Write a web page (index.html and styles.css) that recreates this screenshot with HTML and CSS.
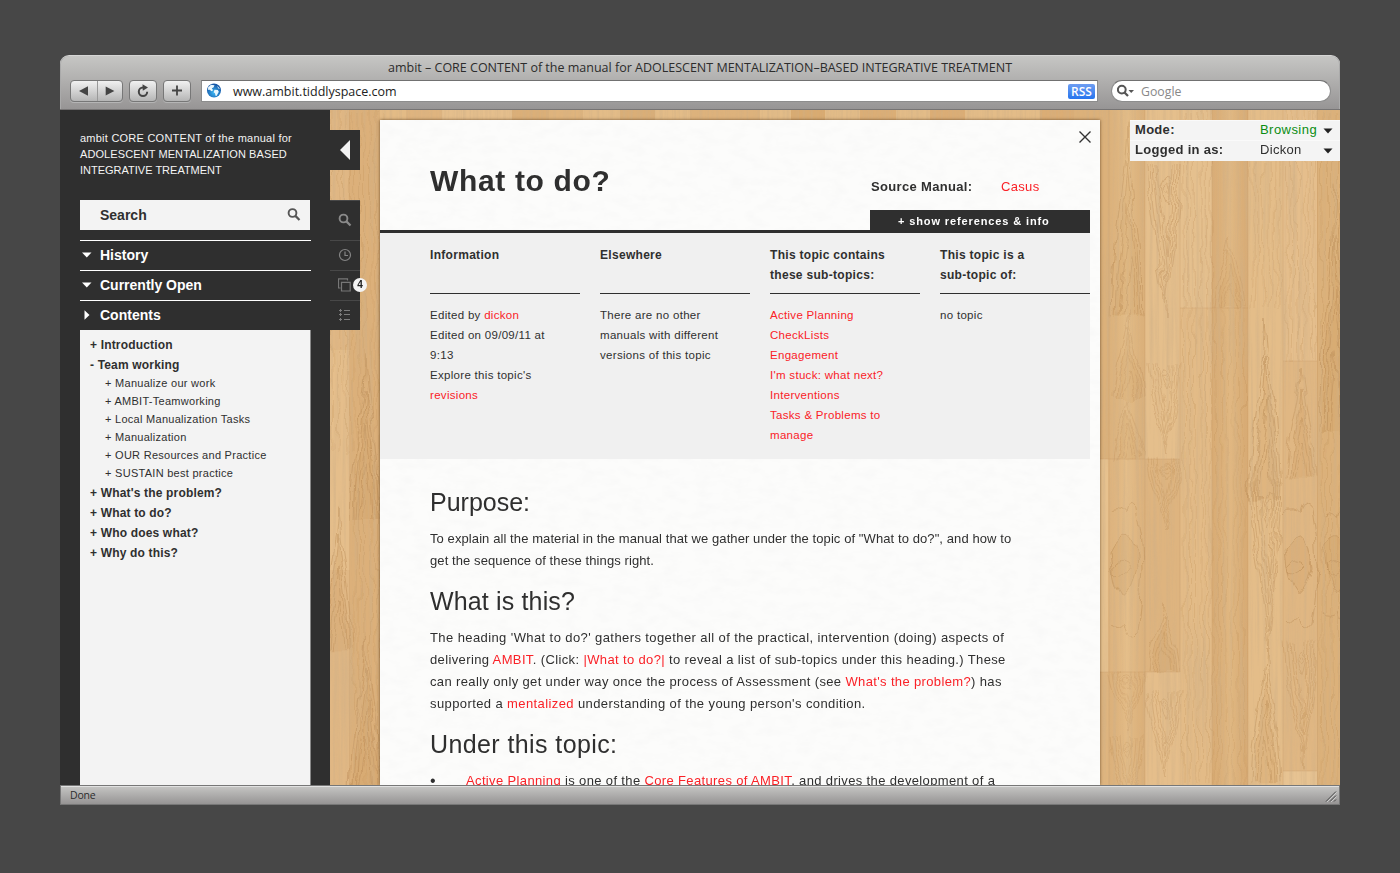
FILE: index.html
```html
<!DOCTYPE html>
<html lang="en">
<head>
<meta charset="utf-8">
<title>ambit</title>
<link rel="stylesheet" href="styles.css">
</head>
<body>
<div class="window">
  <header class="chrome">
    <div class="win-title"><span>ambit – CORE CONTENT of the manual for ADOLESCENT MENTALIZATION–BASED INTEGRATIVE TREATMENT</span></div>
    <div class="toolbar">
      <div class="btn nav">
        <svg width="26" height="20" viewBox="0 0 26 20"><path d="M8 10 17 5.3V14.700Z" fill="#444"/></svg>
        <svg class="second" width="26" height="20" viewBox="0 0 26 20"><path d="M17 10 8 5.300V14.700Z" fill="#444"/></svg>
      </div>
      <div class="btn"><svg width="26" height="20" viewBox="0 0 26 20"><path d="M13 6.500A4.200 4.200 0 1 0 17.200 10.700" fill="none" stroke="#444" stroke-width="2"/><path d="M12.500 3.200 18 6.600 12.800 9.800Z" fill="#444"/></svg></div>
      <div class="btn"><svg width="26" height="20" viewBox="0 0 26 20"><path d="M8 9.500H18M13 4.500V14.500" stroke="#444" stroke-width="1.800"/></svg></div>
      <div class="address">
        <svg width="16" height="16" viewBox="0 0 16 16"><defs><radialGradient id="globe" cx=".5" cy=".65" r=".6"><stop offset="0" stop-color="#3cb8f5"/><stop offset="1" stop-color="#1454a5"/></radialGradient></defs><circle cx="7" cy="7.500" r="7" fill="url(#globe)"/><path d="M1 4.500 4 1.700 7.500 2.300 6.500 4.500 4.800 5.200 6.200 7.300 4.500 8.300 2.800 6.800 1.200 7ZM7.500 6.700 10.800 7 11.800 8.700 9.500 13 8.500 12.700 8 10.300 6.600 9.300ZM10 2.800 13 5.800 11.300 5.600Z" fill="#e9f7fd"/></svg>
        <span class="url">www.ambit.tiddlyspace.com</span>
        <span class="rss">RSS</span>
      </div>
      <div class="google">
        <svg width="20" height="14" viewBox="0 0 20 14"><circle cx="4.800" cy="5.600" r="3.900" fill="none" stroke="#555" stroke-width="2"/><path d="M7.500 8.500 11 12" stroke="#555" stroke-width="2.300"/><path d="M11.500 6H17L14.200 9Z" fill="#555"/></svg>
        <span>Google</span>
      </div>
    </div>
  </header>

  <main class="viewport">
    <svg class="wood" width="1010" height="675" viewBox="330 110 1010 675">
      <defs>
        <filter id="grain" x="0" y="0" width="100%" height="100%"><feTurbulence type="fractalNoise" baseFrequency=".3 .008" numOctaves="4" seed="8"/><feColorMatrix values="0 0 0 0 .62  0 0 0 0 .43  0 0 0 0 .24  1.200 0 0 0 -.5"/></filter>
        <filter id="warp" x="0" y="0" width="100%" height="100%"><feTurbulence type="fractalNoise" baseFrequency=".05 .03" numOctaves="3" seed="5"/><feDisplacementMap in="SourceGraphic" scale="13" xChannelSelector="R" yChannelSelector="G"/></filter>
        <linearGradient id="tint"><stop offset="0" stop-color="#c08c54" stop-opacity=".1"/><stop offset=".5" stop-color="#f5d9a8" stop-opacity=".2"/><stop offset="1" stop-color="#c08c54" stop-opacity=".15"/></linearGradient>
        <symbol id="arch" width="35" height="160" viewBox="0 0 35 160" preserveAspectRatio="none"><path d="M6 158C8 98 15 90 18 36 22 88 28 100 30 158Z" fill="#cc9a60" fill-opacity=".22"/><g fill="none" stroke="#b98a54" stroke-opacity=".6" stroke-width=".8"><path d="M2 158C5 75 14 75 18 6 21 60 30 80 33 158"/><path d="M6 158C8 98 15 90 18 36 22 88 28 100 30 158"/><path d="M9 158C11 120 16 108 19 70 22 108 26 118 27 158"/><path d="M12 158Q15 132 19 108 23 135 24 158"/></g></symbol>
        <symbol id="vein" width="35" height="160" viewBox="0 0 35 160" preserveAspectRatio="none"><g fill="none" stroke="#b98a54" stroke-opacity=".5" stroke-width=".8"><path d="M1 2C5 80 14 90 20 158 24 100 32 80 34 2"/><path d="M5 2C8 75 15 84 20 140 24 90 30 75 31 2"/><path d="M8 2C11 60 17 72 20 118 24 74 27 60 28 2"/><path d="M11 2C13 46 18 60 20 96 23 60 24 46 25 2"/><path d="M14 22Q20 2 24 22 22 38 20 45 17 36 14 22ZM16 24Q20 12 22 24 20 34 16 24"/></g></symbol>
        <symbol id="knot" width="35" height="150" viewBox="0 0 35 150" preserveAspectRatio="none"><path d="M2 58Q10 42 17 45 27 52 28 75 24 97 14 105 5 95 2 58Z" fill="#cc9a60" fill-opacity=".22"/><g fill="none" stroke="#b98a54" stroke-opacity=".65" stroke-width=".8"><path d="M5 75Q12 64 21 76 12 87 5 81ZM2 58Q10 42 17 45 27 52 28 75 24 97 14 105 5 95 2 58ZM1 20Q10 13 16 22 20 3 28 15 34 45 34 76 31 115 28 136 20 148 16 128 10 137 1 130"/></g></symbol>
        <symbol id="lines" width="35" height="160" viewBox="0 0 35 160" preserveAspectRatio="none"><g fill="none" stroke="#b98a54" stroke-opacity=".3" stroke-width=".7"><path d="M3 0Q7 80 4 160M9 0Q11 70 8 160M15 0Q13 70 16 160M21 0Q24 80 20 160M27 0Q25 90 28 160M32 0Q30 80 32 160"/></g></symbol>
      </defs>
      <rect x="330" y="110" width="1010" height="675" fill="#e3bc88"/>
      <g>
        <rect x="330" y="110" width="20" height="675" fill="#e0b784"/><rect x="350" y="110" width="30" height="675" fill="#dcb07a"/><rect x="330" y="350" width="20" height="220" fill="#e5be8b"/>
        <rect x="380" y="110" width="26" height="10" fill="#e3bb86"/><rect x="406" y="110" width="36" height="10" fill="#dfb47f"/><rect x="442" y="110" width="70" height="10" fill="#e5bf8d"/><rect x="512" y="110" width="37" height="10" fill="#dbaf78"/><rect x="549" y="110" width="34" height="10" fill="#dfb47d"/><rect x="620" y="110" width="35" height="10" fill="#daae77"/><rect x="690" y="110" width="70" height="10" fill="#ddb27c"/><rect x="791" y="110" width="34" height="10" fill="#d9ab71"/><rect x="860" y="110" width="36" height="10" fill="#dbae76"/><rect x="930" y="110" width="35" height="10" fill="#dbad75"/><rect x="1040" y="110" width="34" height="10" fill="#dbad75"/>
        <rect x="1074" y="110" width="35" height="349" fill="#dcb17a"/><rect x="1109" y="110" width="36" height="349" fill="#dfb680"/><rect x="1145" y="110" width="35" height="349" fill="#e5bf8c"/><rect x="1180" y="110" width="32" height="198" fill="#e5c08e"/><rect x="1212" y="110" width="36" height="198" fill="#dcb17b"/><rect x="1248" y="110" width="35" height="675" fill="#e4bd89"/><rect x="1283" y="110" width="34" height="251" fill="#e5be8c"/><rect x="1317" y="110" width="23" height="675" fill="#dcb17a"/>
        <rect x="1100" y="459" width="8" height="213" fill="#e7c28f"/><rect x="1108" y="459" width="37" height="213" fill="#e1b883"/><rect x="1145" y="459" width="35" height="213" fill="#deb47f"/><rect x="1180" y="308" width="32" height="477" fill="#e3bb87"/><rect x="1212" y="308" width="36" height="477" fill="#dcb079"/><rect x="1283" y="361" width="34" height="410" fill="#e0b783"/><rect x="1283" y="771" width="34" height="14" fill="#e7c392"/><rect x="1100" y="672" width="45" height="113" fill="#dfb57f"/><rect x="1145" y="672" width="35" height="113" fill="#e5be8b"/>
      </g>
      <g filter="url(#warp)">
        <use href="#arch" x="1110" y="115" height="205"/><use href="#arch" x="1110" y="310" height="90"/><use href="#arch" x="1110" y="397" height="62"/><use href="#vein" x="1146" y="162"/><use href="#vein" x="1146" y="362" height="96"/><use href="#lines" x="1180" y="110" height="198"/><use href="#arch" x="1212" y="235" height="73"/><use href="#lines" x="1212" y="308" height="477"/><use href="#lines" x="1180" y="308" height="477"/><use href="#lines" x="1248" y="161" height="149"/><use href="#arch" x="1248" y="312" height="190"/><use href="#vein" x="1248" y="480" height="170"/><use href="#arch" x="1248" y="640" height="145"/><use href="#lines" x="1283" y="110" height="251"/><use href="#arch" x="1283" y="365" height="115"/><use href="#knot" x="1283" y="492" height="148"/><use href="#vein" x="1283" y="640" height="130"/><use href="#arch" x="1317" y="175" height="260"/><use href="#knot" x="1322" y="500" height="130"/><use href="#lines" x="1317" y="110" height="675"/><use href="#knot" x="1109" y="490" height="155"/><use href="#vein" x="1109" y="672" height="62"/><use href="#vein" x="1109" y="735" height="80"/><use href="#vein" x="1146" y="459" height="70"/><use href="#arch" x="1146" y="600" height="72"/><use href="#vein" x="1146" y="690" height="90"/>
        <use href="#lines" x="318" y="110" height="340"/><use href="#arch" x="320" y="500" height="150"/><use href="#arch" x="348" y="350" height="170"/><use href="#arch" x="348" y="630"/><use href="#lines" x="350" y="110" height="675"/>
      </g>
      <rect x="1109" y="110" width="36" height="675" fill="url(#tint)"/><rect x="1212" y="110" width="36" height="675" fill="url(#tint)"/>
      <path d="M349.500 110V785M1109 110V785M1145 110V785M1180 110V672M1212 110V785M1248 110V785M1283 110V785M1317.500 110V785M1180 308H1248M1283 361H1317M1100 459H1180M1100 672H1180M1283 771H1317" fill="none" stroke="#bd8b53" stroke-opacity=".3" stroke-width=".8"/>
      <rect x="330" y="110" width="1010" height="675" filter="url(#grain)"/>
    </svg>

    <aside class="sidebar">
      <p class="brand"><span class="b1">ambit CORE CONTENT of the manual for</span><br><span class="b2">ADOLESCENT MENTALIZATION BASED</span><br><span class="b3">INTEGRATIVE TREATMENT</span></p>
      <div class="search"><span>Search</span><svg width="14" height="14" viewBox="0 0 14 14"><circle cx="5.500" cy="5" r="3.900" fill="none" stroke="#555" stroke-width="1.900"/><path d="M8.400 7.900 12.500 12" stroke="#555" stroke-width="2.200"/></svg></div>
      <div class="sections">
        <div class="section"><svg width="10" height="10" viewBox="0 0 10 10"><path d="M0 2.500H9.500L4.800 7.500Z" fill="#fff"/></svg><span>History</span></div>
        <div class="section"><svg width="10" height="10" viewBox="0 0 10 10"><path d="M0 2.500H9.500L4.800 7.500Z" fill="#fff"/></svg><span>Currently Open</span></div>
        <div class="section"><svg width="10" height="10" viewBox="0 0 10 10"><path d="M2.500 .2V9.800L7.500 5Z" fill="#fff"/></svg><span>Contents</span></div>
      </div>
      <ul class="tree">
        <li>+ Introduction</li>
        <li>- Team working
          <ul class="subtree"><li>+ Manualize our work</li><li>+ AMBIT-Teamworking</li><li>+ Local Manualization Tasks</li><li>+ Manualization</li><li>+ OUR Resources and Practice</li><li>+ SUSTAIN best practice</li></ul>
        </li>
        <li>+ What's the problem?</li><li>+ What to do?</li><li>+ Who does what?</li><li>+ Why do this?</li>
      </ul>
    </aside>

    <nav class="tabs">
      <div class="collapse"><svg width="30" height="40" viewBox="0 0 30 40"><path d="M10 20 20 10V30Z" fill="#f4f4f4"/></svg></div>
      <div class="tab-list">
        <div class="tab tall"><svg width="14" height="14" viewBox="0 0 14 14"><circle cx="5.500" cy="5.500" r="3.900" fill="none" stroke="#8a8a8a" stroke-width="1.900"/><path d="M8.400 8.400 12.500 12.500" stroke="#8a8a8a" stroke-width="2.200"/></svg></div>
        <div class="tab"><svg width="14" height="14" viewBox="0 0 14 14"><circle cx="7" cy="7" r="5.500" fill="none" stroke="#858585" stroke-width="1.200"/><path d="M7 3.500V7.500H10" fill="none" stroke="#858585" stroke-width="1.200"/></svg></div>
        <div class="tab"><svg width="14" height="14" viewBox="0 0 14 14"><path d="M2.500 10H.500V.800H9.500V2.500M3.500 4.300H12.200V13H3.500Z" fill="none" stroke="#777" stroke-width="1.200"/></svg><span class="badge">4</span></div>
        <div class="tab"><svg width="14" height="14" viewBox="0 0 14 14"><path d="M6 2.500H12M6 6.500H12M6 11.500H12M1 2.500H4M1 6.500H4M1 11.500H4M2.500 1V4M2.500 5V8M2.500 10V13" stroke="#7c7c7c"/></svg></div>
      </div>
    </nav>

    <article class="page">
      <svg class="paper" width="720" height="665"><defs><filter id="fiber" x="0" y="0" width="100%" height="100%"><feTurbulence type="fractalNoise" baseFrequency=".06 .12" numOctaves="3" seed="3"/><feColorMatrix values="0 0 0 0 .86  0 0 0 0 .86  0 0 0 0 .86  .5 0 0 0 -.2"/></filter></defs><rect width="720" height="665" filter="url(#fiber)"/></svg>
      <header class="page-head">
        <div class="heading"><h1>What to do?</h1></div>
        <div class="meta">
          <svg class="close" width="12" height="12" viewBox="0 0 12 12"><path d="M.500.500 11.500 11.500M11.500.500.500 11.500" stroke="#333" stroke-width="1.400"/></svg>
          <div class="source"><b>Source Manual:</b><a>Casus</a></div>
          <div class="show">+ show references &amp; info</div>
        </div>
      </header>
      <section class="info">
        <div class="col"><h3>Information</h3><p>Edited by <a>dickon</a><br>Edited on 09/09/11 at<br>9:13<br>Explore this topic's<br><a>revisions</a></p></div>
        <div class="col"><h3>Elsewhere</h3><p>There are no other<br>manuals with different<br>versions of this topic</p></div>
        <div class="col"><h3>This topic contains<br>these sub-topics:</h3><p><a>Active Planning</a><br><a>CheckLists</a><br><a>Engagement</a><br><a>I'm stuck: what next?</a><br><a>Interventions</a><br><a>Tasks &amp; Problems to<br>manage</a></p></div>
        <div class="col"><h3>This topic is a<br>sub-topic of:</h3><p>no topic</p></div>
      </section>
      <section class="body">
        <h2>Purpose:</h2>
        <p><span class="l1">To explain all the material in the manual that we gather under the topic of "What to do?", and how to</span><br><span class="l1">get the sequence of these things right.</span></p>
        <h2 class="h-mid">What is this?</h2>
        <p><span class="l3">The heading 'What to do?' gathers together all of the practical, intervention (doing) aspects of</span><br><span class="l4">delivering <a>AMBIT</a>. (Click: <a>|What to do?|</a> to reveal a list of sub-topics under this heading.) These</span><br><span class="l5">can really only get under way once the process of Assessment (see <a>What's the problem?</a>) has</span><br><span class="l6">supported a <a>mentalized</a> understanding of the young person's condition.</span></p>
        <h2 class="h-wide">Under this topic:</h2>
        <ul class="points"><li><span class="dot">•</span><span class="l5"><a>Active Planning</a> is one of the <a>Core Features of AMBIT</a>, and drives the development of a</span></li></ul>
      </section>
    </article>

    <section class="mode">
      <div class="mode-row"><b>Mode:</b><span class="green">Browsing</span><svg width="10" height="6" viewBox="0 0 10 6"><path d="M.500.500H9.500L5 5.500Z" fill="#222"/></svg></div>
      <div class="mode-row"><b>Logged in as:</b><span>Dickon</span><svg width="10" height="6" viewBox="0 0 10 6"><path d="M.500.500H9.500L5 5.500Z" fill="#222"/></svg></div>
    </section>
  </main>

  <footer class="status"><span>Done</span><svg width="14" height="14" viewBox="0 0 14 14"><path d="M2 13.500 12 3.500M6 13.500 12 7.500M10 13.500 12 11.500" stroke="#444"/><path d="M3 14 12.500 4.500M7 14 12.500 8.500" stroke="#ddd" stroke-width=".7"/></svg></footer>
</div>
</body>
</html>
```
FILE: styles.css
```css
* { box-sizing: border-box; }
body { margin: 0; width: 1400px; height: 873px; overflow: hidden; padding: 55px 60px; background: #474747; color: #2f2f2f; font-family: "Liberation Sans", Arial, sans-serif; font-size: 13px; white-space: nowrap; }
h1, h2, h3, p, ul { margin: 0; padding: 0; list-style: none; }
a { color: #fa2127; }
svg { display: block; flex: none; }
.window { width: 1280px; height: 750px; display: flex; flex-direction: column; }
.chrome { height: 55px; border-radius: 9px 9px 0 0; border-top: 1px solid #d6d6d5; border-bottom: 1px solid #767474; background: linear-gradient(#c6c6c4, #979595); font-family: "Open Sans", "Noto Sans", sans-serif; box-shadow: inset 1px 0 #aaa, inset -1px 0 #aaa; }
.win-title { height: 24px; line-height: 24px; text-align: center; font-size: 12.5px; color: #2c2c2c; }
.toolbar { display: flex; padding: 0 9px 0 10px; }
.btn { display: flex; align-items: center; height: 22px; width: 28px; margin-right: 6px; border: 1px solid #777; border-radius: 4px; background: linear-gradient(#f1f1f1, #b5b5b5); box-shadow: 0 1px #b5b5b5; }
.nav { width: 53px; }
.second { border-left: 1px solid #999; }
.address { display: flex; align-items: center; width: 897px; height: 22px; margin-left: 4px; padding: 0 2px 0 5px; background: #fff; border: 1px solid #8d8d8d; border-top-color: #717171; }
.url { margin-left: 10px; font-size: 12.5px; color: #222; }
.rss { margin-left: auto; width: 27px; height: 15px; border-radius: 2px; background: linear-gradient(#6d9df2, #2675ee); color: #fff; font-size: 12px; font-weight: 600; line-height: 15px; text-align: center; }
.google { display: flex; align-items: center; width: 220px; height: 22px; margin-left: 13px; padding-left: 5px; background: #fff; border: 1px solid #8d8d8d; border-top-color: #717171; border-radius: 11px; color: #888; font-size: 12.3px; }
.google span { margin-left: 4px; }
.viewport { position: relative; height: 675px; display: flex; overflow: hidden; background: #dfb681; }
.wood { position: absolute; left: 270px; top: 0; }
.sidebar { position: relative; width: 270px; padding: 20px 20px 0; background: #2f2f2f; color: #fff; display: flex; flex-direction: column; flex: none; }
.brand { height: 70px; font-size: 11px; line-height: 16px; color: #f4f4f4; }
.b1 { letter-spacing: .24px; }
.b2 { letter-spacing: .09px; }
.search { height: 30px; flex: none; width: 230px; padding: 0 9px 0 20px; background: #f3f3f3; color: #2f2f2f; display: flex; justify-content: space-between; align-items: center; font-weight: bold; font-size: 14px; }
.sections { margin-top: 10px; }
.section { width: 231px; height: 30px; border-top: 1px solid #fff; padding: 0 0 1px 2px; display: flex; align-items: center; gap: 8px; font-size: 14px; font-weight: bold; line-height: 16px; }
.section span { padding-bottom: 1px; }
.tree { width: 231px; flex: 1; padding: 5px 0 0 10px; background: #f3f3f3; border-right: 1px solid #888; color: #2f2f2f; font-size: 12px; font-weight: bold; line-height: 20px; letter-spacing: .17px; }
.subtree { margin: -1px 0 1px; padding-left: 15px; font-size: 11px; font-weight: normal; line-height: 18px; letter-spacing: .28px; }
.subtree + li { margin-top: 0; }
.tabs { position: relative; width: 30px; padding-top: 20px; flex: none; }
.collapse { height: 40px; margin-bottom: 30px; background: #2f2f2f; }
.tab-list { height: 130px; background: #2f2f2f; }
.tab { position: relative; height: 30px; border-top: 1px solid #484848; display: flex; align-items: center; padding: 0 0 2px 8px; }
.tall { height: 40px; }
.badge { position: absolute; left: 23px; top: 7px; width: 14px; height: 14px; border-radius: 50%; background: #f4f4f4; color: #222; font-size: 10px; font-weight: bold; line-height: 14px; text-align: center; }
.page { position: relative; width: 720px; height: 665px; margin: 10px 0 0 20px; flex: none; background: #fcfcfb; box-shadow: 0 0 3px rgba(60, 35, 10, .7); }
.paper { position: absolute; left: 0; top: 0; }
.page-head { position: relative; height: 113px; display: flex; justify-content: space-between; padding-right: 10px; }
.heading { width: 490px; height: 113px; padding: 43px 0 0 50px; border-bottom: 3px solid #2f2f2f; }
h1 { font-size: 30px; line-height: 36px; letter-spacing: .65px; }
.meta { width: 220px; display: flex; flex-direction: column; }
.close { margin: 11px 0 0 209px; }
.source { display: flex; margin-top: 34px; line-height: 20px; letter-spacing: .33px; }
.source b { width: 131px; padding-left: 1px; }
.show { margin-top: auto; height: 23px; line-height: 22px; padding-left: 28px; background: #2f2f2f; color: #fff; font-size: 11px; font-weight: bold; letter-spacing: .88px; }
.info { position: relative; width: 710px; height: 226px; padding: 12px 0 0 50px; display: grid; grid-template-columns: repeat(4, 150px); column-gap: 20px; background: #f0f0f0; line-height: 20px; }
h3 { height: 49px; border-bottom: 1px solid #2f2f2f; font-size: 12px; line-height: 20px; letter-spacing: .3px; }
.col p { margin-top: 11px; font-size: 11.5px; letter-spacing: .3px; }
.body { position: relative; padding: 28px 0 0 50px; line-height: 22px; }
h2 { font-size: 25px; font-weight: normal; line-height: 30px; }
.h-mid { letter-spacing: .15px; }
.h-wide { letter-spacing: .4px; }
.body p { margin: 11px 0 14px; }
.l1 { letter-spacing: .09px; }
.l3 { letter-spacing: .405px; }
.l4 { letter-spacing: .37px; }
.l5 { letter-spacing: .36px; }
.l6 { letter-spacing: .4px; }
.points { margin-top: 11px; }
.points li { display: flex; }
.points a { text-decoration: underline; }
.dot { width: 36px; font-size: 16px; }
.mode { position: relative; width: 210px; height: 41px; margin: 10px 0 0 30px; background: #f4f4f4; }
.mode-row { height: 20px; padding: 0 7px 0 5px; display: flex; align-items: center; box-shadow: inset 0 1px #fafafa; line-height: 16px; letter-spacing: .3px; }
.mode-row b, .mode-row span { padding-bottom: 1px; }
.mode-row b { width: 125px; }
.mode-row svg { margin: 2px 0 0 auto; }
.green { color: #0a8d12; letter-spacing: .45px; }
.status { height: 20px; display: flex; justify-content: space-between; align-items: center; padding: 0 1px 0 9px; border: 1px solid #777; box-shadow: inset 0 1px #e1e1e1; background: linear-gradient(#c6c6c4, #969494); color: #2c2c2c; font-family: "Open Sans", "Noto Sans", sans-serif; font-size: 10.5px; }
.status span { padding-bottom: 1px; letter-spacing: -.2px; }
```
